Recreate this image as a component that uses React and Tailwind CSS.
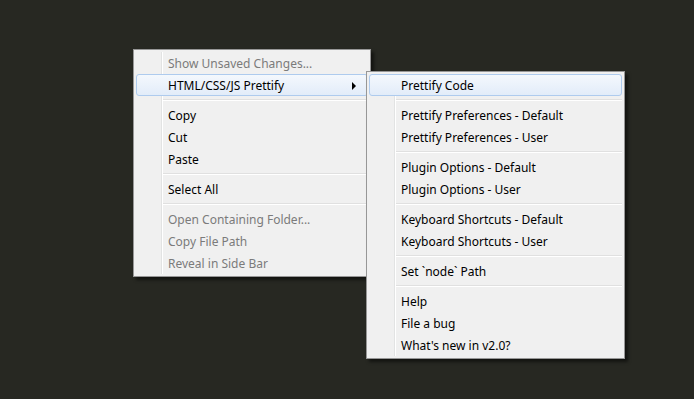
import React from 'react';

const mainItems = [
  { label: 'Show Unsaved Changes...', disabled: true },
  { label: 'HTML/CSS/JS Prettify', active: true, submenu: true },
  { sep: true },
  { label: 'Copy' },
  { label: 'Cut' },
  { label: 'Paste' },
  { sep: true },
  { label: 'Select All' },
  { sep: true },
  { label: 'Open Containing Folder...', disabled: true },
  { label: 'Copy File Path', disabled: true },
  { label: 'Reveal in Side Bar', disabled: true },
];

const subItems = [
  { label: 'Prettify Code', active: true },
  { sep: true },
  { label: 'Prettify Preferences - Default' },
  { label: 'Prettify Preferences - User' },
  { sep: true },
  { label: 'Plugin Options - Default' },
  { label: 'Plugin Options - User' },
  { sep: true },
  { label: 'Keyboard Shortcuts - Default' },
  { label: 'Keyboard Shortcuts - User' },
  { sep: true },
  { label: 'Set `node` Path' },
  { sep: true },
  { label: 'Help' },
  { label: 'File a bug' },
  { label: "What's new in v2.0?" },
];

const MenuRow = ({ item }) => {
  if (item.sep) {
    return (
      <div className="h-[8px] flex flex-col justify-center pl-[27px]">
        <div className="h-px bg-[#e0e0e0]" />
        <div className="h-px bg-white" />
      </div>
    );
  }

  return (
    <div
      className={`relative h-[22px] flex items-center pl-[31px] pr-[10px] pt-[2px] rounded-[3px] border ${
        item.active
          ? 'border-[#aecbee] bg-gradient-to-b from-[#f4f8fd] to-[#e2ecf9]'
          : 'border-transparent'
      } ${item.disabled ? 'text-[#7b7b7b]' : 'text-black'}`}
    >
      <span className="leading-none">{item.label}</span>
      {item.submenu && (
        <span className="ml-auto mr-[1px] -mt-[1px] w-0 h-0 border-y-[4px] border-y-transparent border-l-[4px] border-l-black" />
      )}
    </div>
  );
};

const Menu = ({ items, className }) => (
  <div
    className={`absolute border border-[#979797] bg-[#f0f0f0] p-[2px] shadow-[3px_3px_3px_rgba(0,0,0,0.5)] ${className}`}
  >
    {/* gutter line */}
    <div className="absolute top-[2px] bottom-[2px] left-[27px] w-[2px] flex">
      <div className="w-px bg-[#e2e3e3]" />
      <div className="w-px bg-white" />
    </div>
    <div className="relative flex flex-col">
      {items.map((item, i) => (
        <MenuRow key={i} item={item} />
      ))}
    </div>
  </div>
);

export default function App() {
  return (
    <div
      className="relative w-[694px] h-[399px] bg-[#272822] overflow-hidden text-[12px]"
      style={{ fontFamily: '"Noto Sans", "Open Sans", sans-serif' }}
    >
      <Menu items={mainItems} className="left-[133px] top-[49px] w-[238px]" />
      <Menu items={subItems} className="left-[366px] top-[71px] w-[259px]" />
    </div>
  );
}
